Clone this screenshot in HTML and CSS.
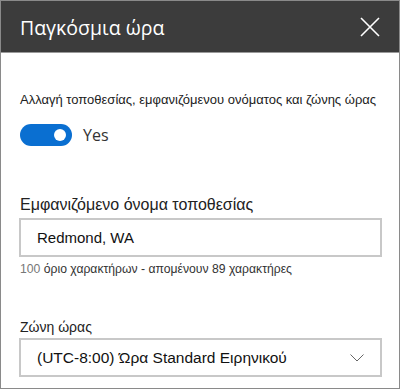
FILE: index.html
```html
<!DOCTYPE html>
<html>
<head>
	<title>Παγκόσμια ώρα</title>
	<meta charset="utf-8">
	<link rel="stylesheet" href="styles.css">
</head>
<body>
	<div class="panel">
		<div class="header">
			<span class="title">Παγκόσμια ώρα</span>
			<svg class="close" width="20" height="20" viewBox="0 0 20 20">
				<path d="M1 1 L19 19 M19 1 L1 19" stroke="#fff" stroke-width="1.6" fill="none"/>
			</svg>
		</div>
		<div class="content">
			<div class="desc">Αλλαγή τοποθεσίας, εμφανιζόμενου ονόματος και ζώνης ώρας</div>
			<div class="toggle-row">
				<div class="toggle"><div class="knob"></div></div>
				<span class="toggle-text">Yes</span>
			</div>

			<div class="label name-label">Εμφανιζόμενο όνομα τοποθεσίας</div>
			<div class="field">Redmond, WA</div>
			<div class="hint"><span class="count">100</span> όριο χαρακτήρων - απομένουν 89 χαρακτήρες</div>

			<div class="label zone-label">Ζώνη ώρας</div>
			<div class="field select">
				<span>(UTC-8:00) Ώρα Standard Ειρηνικού</span>
				<svg width="14" height="8" viewBox="0 0 14 8">
					<path d="M0.5 0.5 L7 7 L13.5 0.5" stroke="#666" stroke-width="1" fill="none"/>
				</svg>
			</div>
		</div>
	</div>
</body>
</html>
```

FILE: styles.css
```css
body{
	margin: 0;
	background-color: #FFF;
}

.panel{
	width: 400px;
	height: 389px;
	box-sizing: border-box;
	border: 1px solid #8a8a8a;
	background-color: #FFF;
}

.header{
	height: 51px;
	background-color: #3c3c3c;
	border-bottom: 1px solid #9a9a9a;
	display: flex;
	align-items: center;
	justify-content: space-between;
	padding: 0 19px 0 19px;
}

.title{
	font-family: "Open Sans", "Noto Sans", sans-serif;
	font-size: 19.5px;
	color: #FFF;
	margin-top: 2px;
}

.content{
	padding: 0 17px 0 19px;
}

.desc{
	font-family: "Liberation Sans", Arial, sans-serif;
	font-size: 13px;
	color: #222;
	white-space: nowrap;
	margin-top: 38px;
	line-height: 18px;
}

.toggle-row{
	display: flex;
	align-items: center;
	margin-top: 15px;
}

.toggle{
	width: 52px;
	height: 22px;
	box-sizing: border-box;
	border-radius: 11px;
	background-color: #0a6fd1;
	display: flex;
	align-items: center;
	justify-content: flex-end;
	padding-right: 6px;
}

.knob{
	width: 12px;
	height: 12px;
	border-radius: 50%;
	background-color: #FFF;
}

.toggle-text{
	font-family: "Open Sans", "Noto Sans", sans-serif;
	font-size: 16px;
	color: #333;
	margin-left: 11px;
}

.label{
	font-family: "Liberation Sans", Arial, sans-serif;
	color: #222;
}

.name-label{
	font-size: 16px;
	margin-top: 48px;
	line-height: 22px;
}

.zone-label{
	font-size: 14px;
	margin-top: 41px;
	line-height: 20px;
}

.field{
	height: 39px;
	box-sizing: border-box;
	border: 2px solid #c8c8c8;
	margin-left: -1px;
	margin-top: 2px;
	display: flex;
	align-items: center;
	padding-left: 16px;
	font-family: "Liberation Sans", Arial, sans-serif;
	font-size: 15px;
	color: #111;
}

.select{
	justify-content: space-between;
	padding-right: 16px;
	font-size: 15.5px;
	margin-top: 1px;
}

.hint{
	font-family: "Liberation Sans", Arial, sans-serif;
	font-size: 12.2px;
	line-height: 13px;
	color: #333;
	margin-top: 6px;
}

.count{
	color: #777;
}
```
